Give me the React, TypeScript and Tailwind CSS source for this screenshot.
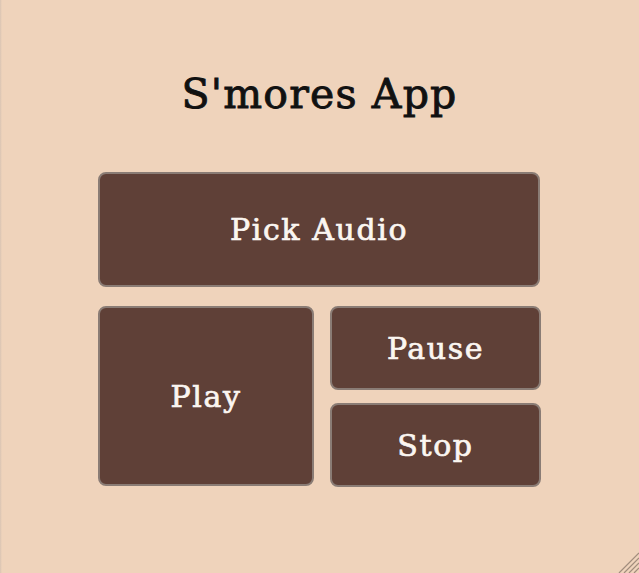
import React from "react";

const font = { fontFamily: '"DejaVu Serif", "Liberation Serif", serif' };

function Btn({ label, className }: { label: string; className?: string }) {
  return (
    <button
      className={
        "flex items-center justify-center rounded-[8px] border-2 border-[#8a7c75] bg-[#5f4037] text-[#fbf6f1] text-[30px] tracking-[1.6px] [-webkit-text-stroke:0.7px_#fbf6f1] " +
        (className ?? "")
      }
      style={font}
    >
      {label}
    </button>
  );
}

export default function App() {
  return (
    <div className="relative h-[573px] w-full overflow-hidden bg-[#efd3bb]">
      <div className="absolute left-0 top-0 h-full w-[2px] bg-gradient-to-r from-[#d9c4b3] to-[#efd3bb]" />
      <div className="flex flex-col items-center pt-[70px]">
        <h1
          className="text-[41px] leading-[48px] tracking-[1.2px] text-[#111] [-webkit-text-stroke:0.9px_#111]"
          style={font}
        >
          S'mores App
        </h1>
        <div className="mt-[54px] flex w-[443px] flex-col gap-[19px]">
          <Btn label="Pick Audio" className="h-[115px] w-[442px]" />
          <div className="flex gap-[16px]">
            <Btn label="Play" className="h-[180px] w-[216px]" />
            <div className="flex flex-1 flex-col gap-[13px]">
              <Btn label="Pause" className="h-[84px]" />
              <Btn label="Stop" className="h-[84px]" />
            </div>
          </div>
        </div>
      </div>
      <svg
        className="absolute bottom-0 right-0"
        width="22"
        height="22"
        viewBox="0 0 22 22"
      >
        <g stroke="#a08c7c" strokeWidth="1.2">
          <line x1="22" y1="2" x2="2" y2="22" />
          <line x1="22" y1="7" x2="7" y2="22" />
          <line x1="22" y1="12" x2="12" y2="22" />
          <line x1="22" y1="17" x2="17" y2="22" />
        </g>
      </svg>
    </div>
  );
}
